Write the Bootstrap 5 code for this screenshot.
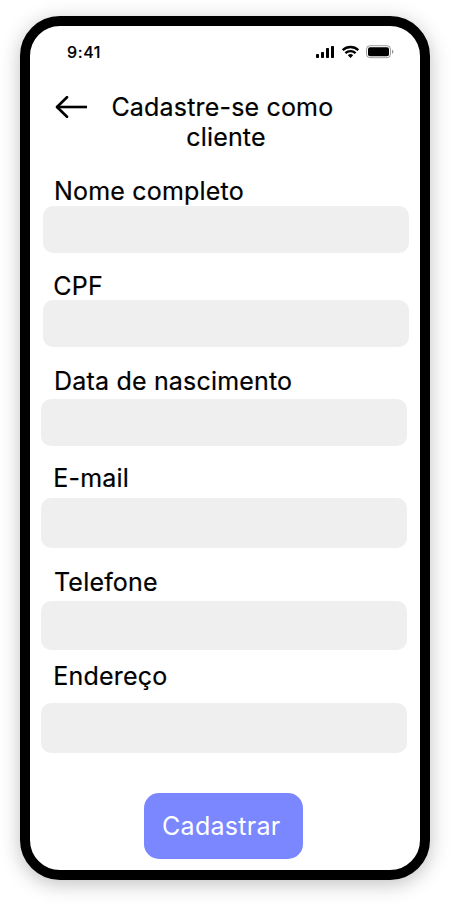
<!DOCTYPE html>
<html lang="pt-BR">
<head>
<meta charset="utf-8">
<meta name="viewport" content="width=device-width, initial-scale=1">
<title>Cadastre-se como cliente</title>
<link href="https://cdn.jsdelivr.net/npm/bootstrap@5.3.0/dist/css/bootstrap.min.css" rel="stylesheet">
<style>
body { font-family: Inter, "Liberation Sans", sans-serif; color: #000; background: #fff; }
.phone { width: 410px; height: 864px; margin: 0 0 0 20px; border: 10px solid #000; border-radius: 40px; background: #fff; box-shadow: 0 4px 20px rgba(0,0,0,.25); }
.status-bar { height: 51px; padding: 16px 26px 0 37px; }
.clock { font-size: 16px; font-weight: 500; line-height: 20px; letter-spacing: .6px; -webkit-text-stroke: .15px; }
.status-icons { margin-top: 3px; }
.top-bar { padding-left: 25px; height: 100px; padding-top: 15px; }
.back-link { margin-top: 4px; line-height: 0; }
.page-title { width: 240px; margin-left: 18px; font-size: 25px; font-weight: 400; line-height: 30px; letter-spacing: .18px; -webkit-text-stroke: .2px; }
.form-label { display: block; font-size: 25px; line-height: 28px; margin: 0 0 0 24px; letter-spacing: .19px; -webkit-text-stroke: .2px; }
.form-control, .form-control:focus { width: 366px; height: 47px; background: #efefef; border: 0; border-radius: 10px; padding: 0 12px; }
.field-cpf { margin-top: 19px; }
.field-birth { margin-top: 20px; }
.field-birth .form-control { margin-top: 4px; }
.field-mail { margin-top: 18px; }
.field-mail .form-control { margin-top: 6px; height: 50px; }
.field-phone { margin-top: 20px; }
.field-phone .form-control { margin-top: 5px; height: 49px; }
.field-address { margin-top: 12px; }
.field-address .form-control { margin-top: 13px; height: 50px; }
.field-name .form-control { margin-top: 1px; }
.field-name .form-control, .field-cpf .form-control { margin-left: 13px; }
.field-birth .form-control, .field-mail .form-control, .field-phone .form-control, .field-address .form-control { margin-left: 11px; }
.field-cpf .form-label, .field-mail .form-label, .field-address .form-label { margin-left: 23.3px; }
.btn-submit, .btn-submit:hover { width: 159px; height: 66px; margin: 40px 0 0 114px; padding: 0 0 0 18px; text-align: left; background: #7b87ff; color: #fff; border: 0; border-radius: 15px; font-size: 25px; line-height: 30px; letter-spacing: .3px; }
</style>
<script src="https://cdn.jsdelivr.net/npm/bootstrap@5.3.0/dist/js/bootstrap.bundle.min.js"></script>
</head>
<body class="min-vh-100 pt-3">
<main class="phone">
  <div class="status-bar d-flex justify-content-between align-items-start">
    <span class="clock">9:41</span>
    <svg class="status-icons" width="79" height="14" viewBox="0 0 79 14" aria-hidden="true">
      <g>
        <rect x="1" y="9" width="3" height="4" rx=".7"/>
        <rect x="6" y="7" width="3" height="6" rx=".7"/>
        <rect x="11" y="3" width="3" height="10" rx=".7"/>
        <rect x="16" y="1" width="3" height="12" rx=".7"/>
      </g>
      <g fill="none" stroke="#000" stroke-width="2.3">
        <path d="M27.7 5.1a11.4 11.4 0 0 1 15.6 0"/>
        <path d="M30.4 8.1a7.4 7.4 0 0 1 10.2 0"/>
      </g>
      <path d="M32.8 10.3a4 4 0 0 1 5.4 0l-2.7 2.7z"/>
      <rect x="51.5" y=".7" width="24" height="12" rx="3.5" fill="none" stroke="#000" stroke-opacity=".38"/>
      <rect x="53" y="2.2" width="21" height="9" rx="2"/>
      <path d="M77 4.8v4c.8-.3 1.4-1.1 1.4-2s-.6-1.7-1.4-2z" fill-opacity=".42"/>
    </svg>
  </div>
  <header class="top-bar d-flex align-items-start">
    <a class="back-link" href="#" aria-label="Voltar">
      <svg width="33" height="22" viewBox="0 0 33 22" fill="none" stroke="#000" stroke-width="2.6"><path d="M1.5 11H32"/><path d="M12 1.2 2 11l10 9.8" stroke-linecap="round" stroke-linejoin="round"/></svg>
    </a>
    <h1 class="page-title mb-0 text-center">Cadastre-se como&nbsp;<br>cliente</h1>
  </header>
  <form>
    <div class="field-name"><label class="form-label" for="nome">Nome completo</label><input class="form-control" id="nome" type="text"></div>
    <div class="field-cpf"><label class="form-label" for="cpf">CPF</label><input class="form-control" id="cpf" type="text"></div>
    <div class="field-birth"><label class="form-label" for="nascimento">Data de nascimento</label><input class="form-control" id="nascimento" type="text"></div>
    <div class="field-mail"><label class="form-label" for="email">E-mail</label><input class="form-control" id="email" type="email"></div>
    <div class="field-phone"><label class="form-label" for="telefone">Telefone</label><input class="form-control" id="telefone" type="tel"></div>
    <div class="field-address"><label class="form-label" for="endereco">Endereço</label><input class="form-control" id="endereco" type="text"></div>
    <button class="btn btn-submit d-block" type="button">Cadastrar</button>
  </form>
</main>
</body>
</html>
